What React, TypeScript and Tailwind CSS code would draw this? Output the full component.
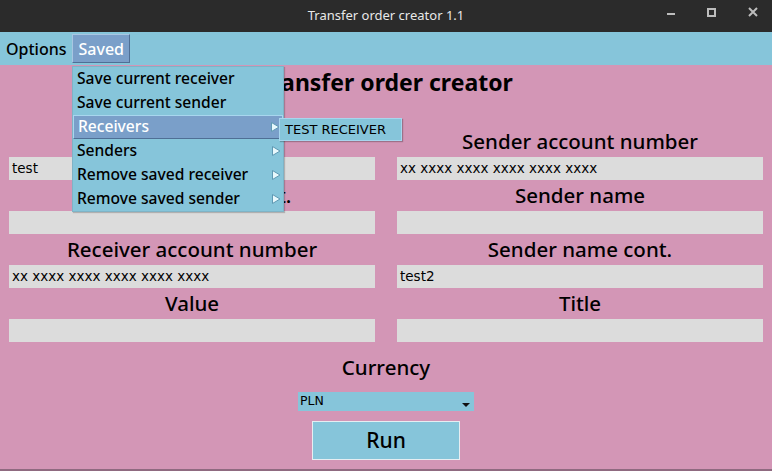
import React from "react";

const label = "font-['Noto_Sans',sans-serif] font-medium text-[20.5px] leading-none text-black text-center h-[31px] flex items-center justify-center";
const entry = "h-[23px] bg-[#dcdcdc] px-[3px] flex items-center font-['DejaVu_Sans',sans-serif] text-[13.5px] text-black";

function Field({ name, value }: { name: string; value?: string }) {
  return (
    <div className="flex flex-col">
      <div className={label}>{name}</div>
      <div className={entry}>{value}</div>
    </div>
  );
}

function Arrow() {
  return (
    <svg width="10" height="12" viewBox="0 0 10 12" className="ml-auto">
      <path d="M1.5 1.5 L9 6 L1.5 10.5 Z" fill="#e8f8fc" stroke="#5f99b3" strokeWidth="1" />
    </svg>
  );
}

export default function App() {
  const items = [
    { t: "Save current receiver", sub: false },
    { t: "Save current sender", sub: false },
    { t: "Receivers", sub: true, active: true },
    { t: "Senders", sub: true },
    { t: "Remove saved receiver", sub: true },
    { t: "Remove saved sender", sub: true },
  ];

  return (
    <div className="relative w-[772px] h-[471px] overflow-hidden bg-[#d396b6] font-['Noto_Sans',sans-serif]">
      {/* title bar */}
      <div className="h-8 bg-[#2b2b2b] relative flex items-center justify-center">
        <span className="text-[13px] text-[#e8e8e8]">Transfer order creator 1.1</span>
        <div className="absolute left-[667px] top-[13px] w-[8px] h-[2px] bg-[#bdbdbd]" />
        <div className="absolute left-[707px] top-[8px] w-[9px] h-[9px] border-2 border-[#bdbdbd]" />
        <svg width="10" height="10" viewBox="0 0 10 10" className="absolute left-[748px] top-[7px]">
          <path d="M1 1 L9 9 M9 1 L1 9" stroke="#bdbdbd" strokeWidth="2" />
        </svg>
      </div>

      {/* menu bar */}
      <div className="h-[33px] bg-[#86c5da] flex items-center text-[16px] font-medium text-black">
        <div className="pl-[6px] pr-[5px] h-[29px] flex items-center">Options</div>
        <div className="h-[29px] w-[58px] pl-[6px] flex items-center bg-[#7a9fc9] text-white border border-[#a8c6e2] border-b-[#4f6f95] border-r-[#4f6f95]">
          Saved
        </div>
      </div>

      {/* content */}
      <div className="px-[9px]">
        <div className="h-[61px] flex items-start justify-center">
          <span className="font-bold text-[23px] text-black">Transfer order creator</span>
        </div>
        <div className="grid grid-cols-2 gap-x-[22px]">
          <div className="flex flex-col">
            <Field name="Receiver name" value="test" />
            <Field name="Receiver name cont." />
            <Field name="Receiver account number" value="xx xxxx xxxx xxxx xxxx xxxx" />
            <Field name="Value" />
          </div>
          <div className="flex flex-col">
            <Field name="Sender account number" value="xx xxxx xxxx xxxx xxxx xxxx" />
            <Field name="Sender name" />
            <Field name="Sender name cont." value="test2" />
            <Field name="Title" />
          </div>
        </div>
        <div className="flex flex-col items-center">
          <div className="h-[50px] flex items-center text-[20.5px] font-medium text-black">Currency</div>
          <div className="w-[176px] h-[19px] bg-[#86c5da] flex items-center pl-[2px] pr-[4px] font-['DejaVu_Sans',sans-serif] text-[12.5px] text-black">
            PLN
            <svg width="8" height="5" viewBox="0 0 8 5" className="ml-auto mt-[8px]">
              <path d="M0 0 L8 0 L4 4 Z" fill="#111" />
            </svg>
          </div>
          <div className="mt-[10px] w-[148px] h-[39px] bg-[#86c5da] border border-[#e6eef2] flex items-center justify-center text-[21px] font-medium text-black">
            Run
          </div>
        </div>
      </div>
      <div className="absolute bottom-0 left-0 right-0 h-[2px] bg-[#8f6a80]" />

      {/* dropdown */}
      <div className="absolute left-[72px] top-[66px] w-[212px] bg-[#86c5da] border border-[#7fb3c6] shadow-[1px_1px_1px_rgba(0,0,0,0.2)] text-[15.6px] font-medium text-black">
        {items.map((it) => (
          <div
            key={it.t}
            className={
              "h-[24px] flex items-center pl-[4px] pr-[2px] " +
              (it.active
                ? "bg-[#7a9fc9] text-white border border-[#a8d6ee] border-b-[#4f6f95]"
                : "")
            }
          >
            <span>{it.t}</span>
            {it.sub && <Arrow />}
          </div>
        ))}
      </div>

      {/* submenu */}
      <div className="absolute left-[279px] top-[118px] w-[123px] h-[23px] bg-[#86c5da] border border-[#a8d6ee] shadow-[1px_1px_1px_rgba(0,0,0,0.25)] flex items-center pl-[5px] font-['DejaVu_Sans',sans-serif] text-[13px] text-black">
        TEST RECEIVER
      </div>
    </div>
  );
}
